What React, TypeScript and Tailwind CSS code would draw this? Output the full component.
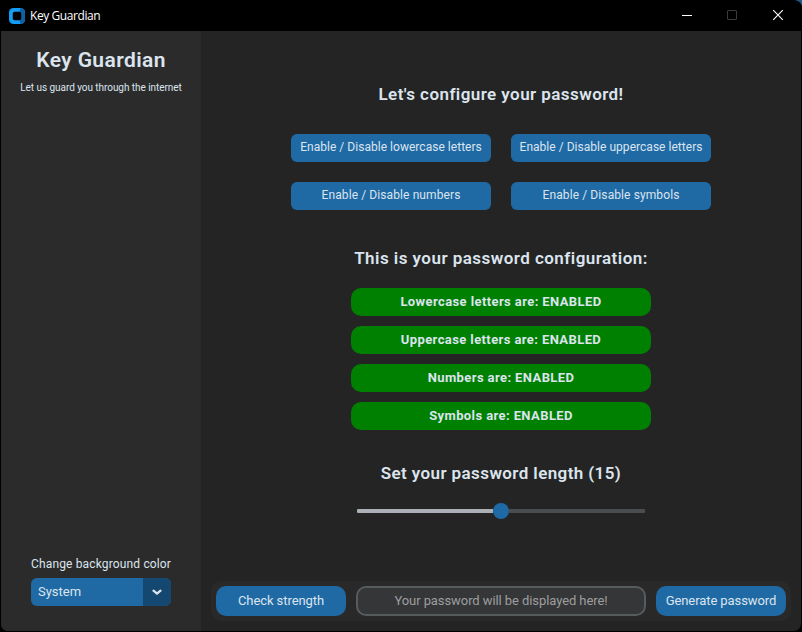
import { useState } from 'react';

const heading = 'text-[17px] font-semibold leading-5 whitespace-nowrap text-[#dce4ee]';

function Toggle({ label, spacing }: { label: string; spacing: string }) {
  return (
    <button className={`flex h-7 w-[200px] items-center justify-center whitespace-nowrap rounded-[6px] bg-[#1f6aa5] pb-[2px] text-[12px] text-[#dce4ee] ${spacing}`}>
      {label}
    </button>
  );
}

function Status({ label }: { label: string }) {
  return (
    <div className="flex h-7 w-[300px] items-center justify-center whitespace-nowrap rounded-[10px] bg-[#008000] pb-px text-[13px] font-bold tracking-[0.4px] text-[#dce4ee]">
      {label}
    </div>
  );
}

function TitleBar() {
  return (
    <header className="flex h-[31px] items-center justify-between bg-black">
      <div className="flex items-center gap-[5px] pl-[9px]">
        <svg width="16" height="16" viewBox="0 0 16 16">
          <rect width="16" height="16" rx="4.5" fill="#149bf3" />
          <path d="M11.5 0a4.5 4.5 0 0 1 4.5 4.5v7a4.5 4.5 0 0 1-4.5 4.5l-1-4 1-1V5l-1-1z" fill="#0f5fa5" />
          <rect x="3.8" y="3.8" width="8.4" height="8.4" rx="1.8" fill="#000" />
        </svg>
        <span className="font-['Open_Sans','Noto_Sans',sans-serif] text-[12px] leading-4 tracking-[-0.42px] text-white">Key Guardian</span>
      </div>
      <svg width="122" height="31" viewBox="0 0 122 31" fill="none">
        <path d="M2 15.5h10" stroke="#fff" />
        <rect x="47.5" y="10.5" width="9" height="9" rx="0.5" stroke="#3a3a3a" />
        <path d="M93.2 10.2l9.6 9.6M102.8 10.2l-9.6 9.6" stroke="#fff" strokeWidth="1.1" />
        <path d="M115 0h7v6c-1-3-3-5-7-6z" fill="#1f5685" />
      </svg>
    </header>
  );
}

export default function App() {
  const [length] = useState(15);
  return (
    <div className="flex h-[632px] w-[802px] flex-col bg-black font-['Roboto',sans-serif] text-[#dce4ee]">
      <TitleBar />
      <div className="mx-px flex h-[600px] overflow-hidden rounded-b-[7px] bg-[#242424]">
        <aside className="flex w-[200px] flex-col items-center bg-[#2b2b2b]">
          <h1 className="mt-[17px] text-[21px] font-semibold leading-6 tracking-[0.4px]">Key Guardian</h1>
          <p className="mt-[9px] whitespace-nowrap text-[10px] leading-[14px] tracking-[-0.05px]">Let us guard you through the internet</p>
          <div className="mt-auto mb-[25px] w-[140px]">
            <div className="whitespace-nowrap text-[12px] leading-4 tracking-[0.15px]">Change background color</div>
            <button className="mt-[6px] flex h-7 w-[140px] overflow-hidden rounded-[6px] bg-[#1f6aa5] text-left text-[13px]">
              <span className="w-28 pl-[7px] leading-[27px]">System</span>
              <span className="flex h-7 w-7 items-center justify-center bg-[#144870]">
                <svg width="10" height="6" viewBox="0 0 10 6" fill="none">
                  <path d="M1.5 1.6L5 4.6l3.5-3" stroke="#dce4ee" strokeWidth="2.2" strokeLinecap="round" strokeLinejoin="round" />
                </svg>
              </span>
            </button>
          </div>
        </aside>
        <main className="flex w-[600px] flex-col items-center">
          <h2 className={`mt-[53px] ${heading} tracking-[0.43px]`}>Let's configure your password!</h2>
          <div className="mt-[30px] grid grid-cols-2 gap-5">
            <Toggle label="Enable / Disable lowercase letters" spacing="tracking-[0.03px]" />
            <Toggle label="Enable / Disable uppercase letters" spacing="tracking-[0.03px]" />
            <Toggle label="Enable / Disable numbers" spacing="tracking-[0.1px]" />
            <Toggle label="Enable / Disable symbols" spacing="tracking-[0.1px]" />
          </div>
          <h2 className={`mt-[38px] ${heading} tracking-[0.46px]`}>This is your password configuration:</h2>
          <div className="mt-5 flex flex-col gap-[10px]">
            <Status label="Lowercase letters are: ENABLED" />
            <Status label="Uppercase letters are: ENABLED" />
            <Status label="Numbers are: ENABLED" />
            <Status label="Symbols are: ENABLED" />
          </div>
          <h2 className={`mt-[33px] ${heading} tracking-[0.4px]`}>Set your password length ({length})</h2>
          <div className="mt-5 flex h-4 w-72 items-center">
            <div className="h-1 w-[136px] rounded-l-[1px] bg-[#aab0b5]" />
            <div className="h-4 w-4 rounded-full bg-[#1f6aa5]" />
            <div className="h-1 w-[136px] rounded-r-[1px] bg-[#4a4d50]" />
          </div>
          <footer className="mt-auto mb-[10px] flex h-10 w-[580px] items-center justify-between rounded-[10px] bg-[#292929] px-[5px] text-[13px] tracking-[-0.08px]">
            <button className="h-[30px] w-[130px] whitespace-nowrap rounded-[10px] bg-[#1f6aa5] leading-[30px]">Check strength</button>
            <div className="flex h-[30px] w-[290px] items-center justify-center whitespace-nowrap rounded-[10px] border-2 border-[#565b5e] bg-[#343638] text-[#9e9e9e]">Your password will be displayed here!</div>
            <button className="h-[30px] w-[130px] whitespace-nowrap rounded-[10px] bg-[#1f6aa5] leading-[30px]">Generate password</button>
          </footer>
        </main>
      </div>
    </div>
  );
}
